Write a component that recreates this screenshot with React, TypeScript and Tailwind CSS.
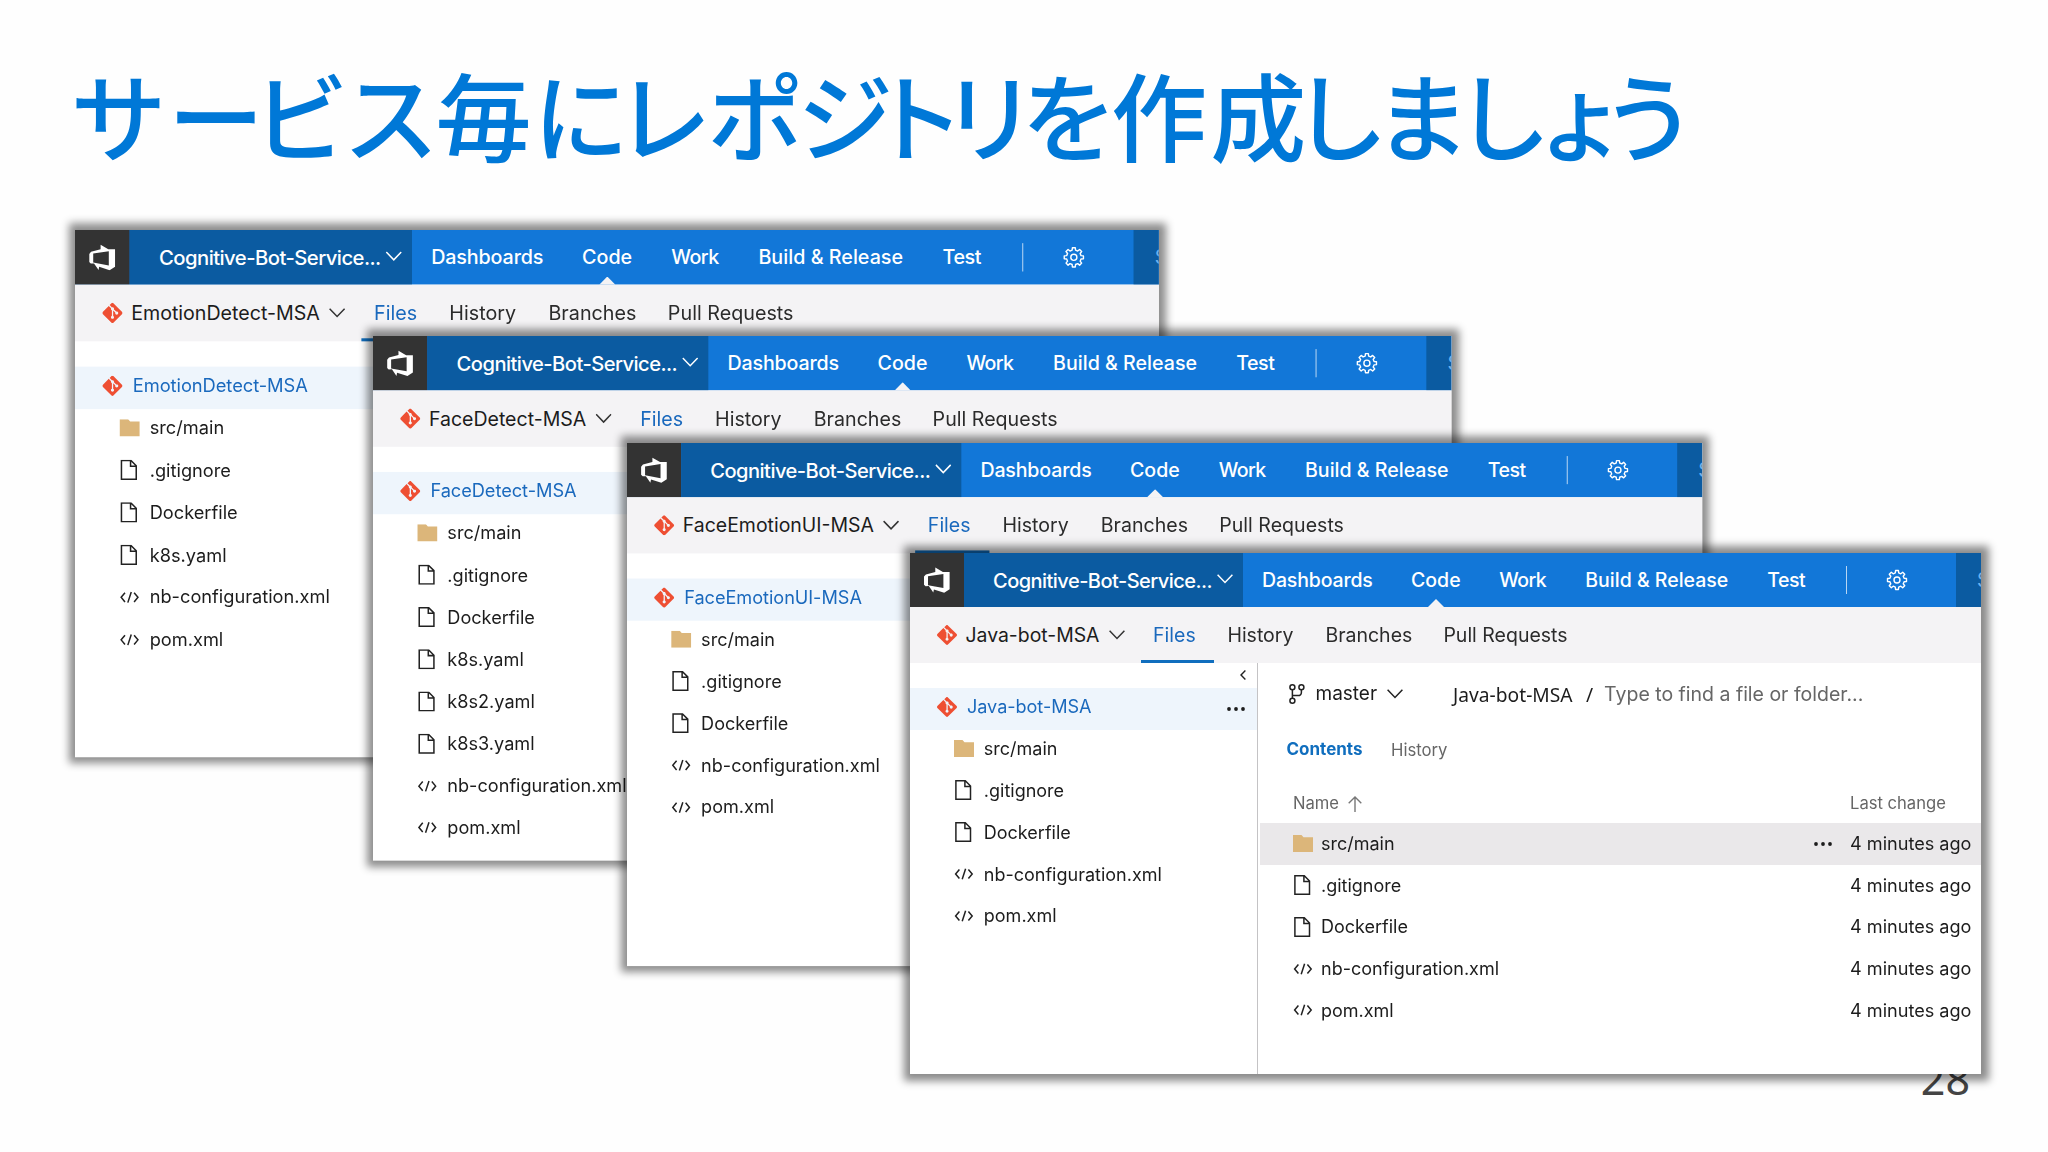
import { clsx } from "clsx";
import type { ReactNode } from "react";
import { SiGit } from "react-icons/si";

type FileKind = "folder" | "file" | "code";

interface RepoEntry {
  kind: FileKind;
  name: string;
}

interface Repo {
  name: string;
  place: string;
  entries: RepoEntry[];
}

const folder = (name: string): RepoEntry => ({ kind: "folder", name });
const file = (name: string): RepoEntry => ({ kind: "file", name });
const code = (name: string): RepoEntry => ({ kind: "code", name });

const repos: Repo[] = [
  {
    name: "EmotionDetect-MSA",
    place: "left-[75px] top-[230px] scale-[1.012]",
    entries: [folder("src/main"), file(".gitignore"), file("Dockerfile"), file("k8s.yaml"), code("nb-configuration.xml"), code("pom.xml")],
  },
  {
    name: "FaceDetect-MSA",
    place: "left-[373px] top-[336px] scale-[1.007]",
    entries: [
      folder("src/main"),
      file(".gitignore"),
      file("Dockerfile"),
      file("k8s.yaml"),
      file("k8s2.yaml"),
      file("k8s3.yaml"),
      code("nb-configuration.xml"),
      code("pom.xml"),
    ],
  },
  {
    name: "FaceEmotionUI-MSA",
    place: "left-[627px] top-[443px] scale-[1.004]",
    entries: [folder("src/main"), file(".gitignore"), file("Dockerfile"), code("nb-configuration.xml"), code("pom.xml")],
  },
  {
    name: "Java-bot-MSA",
    place: "left-[910px] top-[553px]",
    entries: [folder("src/main"), file(".gitignore"), file("Dockerfile"), code("nb-configuration.xml"), code("pom.xml")],
  },
];

const headline: [string, number][] = [
  ["サ", 97.4],
  ["ー", 84.8],
  ["ビ", 90.4],
  ["ス", 92.3],
  ["毎", 97.5],
  ["に", 82.5],
  ["レ", 92.2],
  ["ポ", 89.6],
  ["ジ", 71.9],
  ["ト", 72.3],
  ["リ", 79.8],
  ["を", 89.9],
  ["作", 99.2],
  ["成", 82.1],
  ["し", 82.3],
  ["ま", 80.4],
  ["し", 77.3],
  ["ょ", 68.5],
  ["う", 96],
];

function gearOutline(teeth: number, outer: number, inner: number): string {
  const step = (Math.PI * 2) / teeth;
  const points: string[] = [];
  for (let i = 0; i < teeth; i += 1) {
    const mid = i * step - Math.PI / 2;
    const corners: [number, number][] = [
      [mid - step * 0.3, inner],
      [mid - step * 0.19, outer],
      [mid + step * 0.19, outer],
      [mid + step * 0.3, inner],
    ];
    for (const [angle, radius] of corners) {
      points.push(`${(11 + Math.cos(angle) * radius).toFixed(2)} ${(11 + Math.sin(angle) * radius).toFixed(2)}`);
    }
  }
  return `M${points.join("L")}Z`;
}

const gearPath = gearOutline(8, 9.6, 7.3);

function StudioLogo() {
  return (
    <svg viewBox="0 0 26 26" className="size-[26px]" fill="#fff" fillRule="evenodd">
      <path d="M11.3 .6 18.9 5H25.6V22.2L20.2 25.7 9.9 22.4 9.3 25.6 4.8 19 1.6 19.2 0 17.7V9.6L1.9 7.4 11.3 4.9ZM4 9.3V18.2L19.4 21V7Z" />
    </svg>
  );
}

function Chevron({ className }: { className?: string }) {
  return (
    <svg viewBox="0 0 16 10" className={clsx("h-[10px] w-4 shrink-0", className)} fill="none" stroke="currentColor" strokeWidth="1.5">
      <path d="M.6 .8 8 8.5 15.4 .8" />
    </svg>
  );
}

function Gear() {
  return (
    <svg viewBox="0 0 22 22" className="size-[22px]" fill="none" stroke="#fff" strokeWidth="1.4" strokeLinejoin="round">
      <path d={gearPath} />
      <circle cx="11" cy="11" r="3" />
    </svg>
  );
}

function BranchIcon() {
  return (
    <svg viewBox="0 0 16 20" className="h-5 w-4" fill="none" stroke="#222" strokeWidth="1.5">
      <circle cx="3.4" cy="3.3" r="2.5" />
      <circle cx="12.4" cy="3.3" r="2.5" />
      <circle cx="3.4" cy="16.7" r="2.5" />
      <path d="M3.4 5.8V14.2M12.4 5.8V8.2Q12.4 11.6 9 11.6H3.4" />
    </svg>
  );
}

function Dots() {
  return (
    <svg viewBox="0 0 18 4" className="h-1 w-[18px]" fill="#1c1c1c">
      <circle cx="2" cy="2" r="1.9" />
      <circle cx="9" cy="2" r="1.9" />
      <circle cx="16" cy="2" r="1.9" />
    </svg>
  );
}

function KindIcon({ kind }: { kind: FileKind }) {
  if (kind === "folder") {
    return (
      <svg viewBox="0 0 20 17" className="h-[17px] w-5" fill="#dcb67a">
        <path d="M0 0H8.5L10.5 2.2H20V17H0Z" />
      </svg>
    );
  }
  if (kind === "file") {
    return (
      <svg viewBox="0 0 20 20" className="size-5" fill="none" stroke="#222" strokeWidth="1.5">
        <path d="M1.9 .8H11.3L16.5 6V19.2H1.9ZM10.9 .8V6.4H16.5" />
      </svg>
    );
  }
  return (
    <svg viewBox="0 0 20 12" className="h-3 w-5" fill="none" stroke="#222" strokeWidth="1.5">
      <path d="M5.4 1.4 1.6 6 5.4 10.6M14.4 1.4 18.2 6 14.4 10.6M11.6 .8 8.2 11.2" />
    </svg>
  );
}

function NavItem({ children, className }: { children: ReactNode; className: string }) {
  return <span className={clsx("shrink-0 whitespace-nowrap", className)}>{children}</span>;
}

function TopBar() {
  return (
    <header className="flex h-[54.3px] shrink-0 bg-[#1277d8] text-[19.5px] font-medium text-white">
      <div className="flex w-[54px] shrink-0 items-center justify-center bg-[#333]">
        <StudioLogo />
      </div>
      <div className="flex w-[279px] shrink-0 items-center bg-[#0b5ba1] pl-[29px]">
        <span className="mt-[2px] w-[224px] text-[20px] tracking-[-0.53px]">Cognitive-Bot-Service...</span>
        <Chevron className="-mt-[3px]" />
      </div>
      <nav className="flex min-w-0 flex-1 items-center pl-[19px]">
        <NavItem className="w-[149px] tracking-[-0.15px]">Dashboards</NavItem>
        <NavItem className="relative flex h-full w-[88.3px] items-center">
          Code
          <svg viewBox="0 0 16 8" className="absolute bottom-0 left-[17px] h-2 w-4" fill="#f4f3f5">
            <path d="M0 8 8 0 16 8Z" />
          </svg>
        </NavItem>
        <NavItem className="w-[86px] tracking-[-0.6px]">Work</NavItem>
        <NavItem className="w-[182px]">Build &amp; Release</NavItem>
        <NavItem className="w-[78.7px] tracking-[-0.5px]">Test</NavItem>
        <span className="h-7 w-px shrink-0 bg-white/70" />
        <span className="ml-[39px] shrink-0">
          <Gear />
        </span>
      </nav>
      <div className="w-[25px] shrink-0 overflow-hidden bg-[#0b5ba1] pt-[13px] pl-[21px] font-normal text-[#6fb1ee]">S</div>
    </header>
  );
}

function RepoBar({ name }: { name: string }) {
  return (
    <div className="flex h-[55.4px] shrink-0 items-center bg-[#f4f3f5] pl-[27px] text-[19.5px] text-[#2b2b2b]">
      <SiGit className="size-5 shrink-0 text-[#ee4f33]" />
      <span className="mt-[2px] ml-[8.5px] text-[19.4px] whitespace-nowrap text-[#1c1c1c]">{name}</span>
      <Chevron className="ml-[9px] text-[#333]" />
      <span className="ml-[16px] flex h-full w-[73.6px] shrink-0 items-center border-b-[3px] border-[#106ebe] pt-[5px] pl-[12.6px] text-[#1a69bd]">
        Files
      </span>
      <span className="mt-[2px] ml-[13.3px] w-[98px] shrink-0">History</span>
      <span className="mt-[2px] w-[118px] shrink-0">Branches</span>
      <span className="mt-[2px] whitespace-nowrap">Pull Requests</span>
    </div>
  );
}

function FileTree({ repo }: { repo: Repo }) {
  return (
    <aside className="flex w-[348px] shrink-0 flex-col border-r border-[#c4c3c5] text-[18px] text-[#1c1c1c]">
      <div className="flex h-[25.3px] shrink-0 items-center justify-end pr-[11.5px]">
        <svg viewBox="0 0 6 10" className="h-[10px] w-[6px]" fill="none" stroke="#222" strokeWidth="1.4">
          <path d="M5.4 .5 1 5 5.4 9.5" />
        </svg>
      </div>
      <div className="flex h-[41.85px] shrink-0 items-center bg-[#eef5fc] pr-[12.5px] pb-[4.5px] pl-[27px]">
        <SiGit className="size-5 text-[#ee4f33]" />
        <span className="ml-[10px] text-[18.1px] tracking-[-0.05px] text-[#1a69bd]">{repo.name}</span>
        <span className="mt-[4px] ml-auto flex">
          <Dots />
        </span>
      </div>
      {repo.entries.map((entry) => (
        <div key={entry.name} className="flex h-[41.85px] shrink-0 items-center gap-[9.5px] pb-[4.5px] pl-[44.3px]">
          <KindIcon kind={entry.kind} />
          <span>{entry.name}</span>
        </div>
      ))}
    </aside>
  );
}

function ContentsPane({ repo }: { repo: Repo }) {
  return (
    <section className="flex min-w-0 flex-1 flex-col pl-[2px] text-[18px] text-[#1c1c1c]">
      <div className="flex h-[62px] shrink-0 items-center pl-[28.5px] whitespace-nowrap">
        <BranchIcon />
        <span className="mt-[2px] ml-[11px] text-[19px]">master</span>
        <Chevron className="ml-[10px] text-[#222]" />
        <span className="mt-[3px] ml-[50px] w-[133px] font-['Noto_Sans','Open_Sans',sans-serif] text-[19.2px]">{repo.name}</span>
        <span className="mt-[3px] w-[18px] font-['Noto_Sans','Open_Sans',sans-serif] text-[19.2px]">/</span>
        <span className="mt-[2px] text-[19.5px] text-[#666]">Type to find a file or folder...</span>
      </div>
      <div className="flex h-[49px] shrink-0 items-center gap-[28.5px] pt-[2px] pl-[26.5px]">
        <span className="text-[17px] font-bold text-[#106ebe]">Contents</span>
        <span className="text-[16.7px] text-[#666]">History</span>
      </div>
      <div className="flex h-[49.5px] shrink-0 items-center pt-[11px] pl-[33px] text-[16.6px] text-[#666]">
        <span>Name</span>
        <svg viewBox="0 0 14 16" className="ml-[9px] h-4 w-[14px]" fill="none" stroke="#777" strokeWidth="1.4">
          <path d="M7 16V1M.7 7.2 7 1 13.3 7.2" />
        </svg>
        <span className="ml-auto w-[131px]">Last change</span>
      </div>
      {repo.entries.map((entry, index) => (
        <div key={entry.name} className={clsx("flex h-[41.7px] shrink-0 items-center pb-px pl-[32.5px]", index === 0 && "bg-[#eae8ea]")}>
          <KindIcon kind={entry.kind} />
          <span className="ml-[8.5px]">{entry.name}</span>
          <span className="ml-auto flex w-[36px]">{index === 0 && <Dots />}</span>
          <span className="w-[131px] text-[18.1px] whitespace-nowrap">4 minutes ago</span>
        </div>
      ))}
    </section>
  );
}

function RepoWindow({ repo, detailed }: { repo: Repo; detailed: boolean }) {
  return (
    <div className={clsx("absolute origin-top-left bg-white shadow-[1px_0px_8px_7px_rgba(0,0,0,0.45)]", repo.place)}>
      <div className="flex h-[521px] w-[1071px] flex-col overflow-hidden">
        <TopBar />
        <RepoBar name={repo.name} />
        <div className="flex min-h-0 flex-1">
          <FileTree repo={repo} />
          {detailed && <ContentsPane repo={repo} />}
        </div>
      </div>
    </div>
  );
}

export default function App() {
  return (
    <main className="relative flex h-[1152px] w-[2048px] flex-col justify-between overflow-hidden bg-[#fefefe] pt-[65px] pb-[52px] font-['Inter',sans-serif]">
      <h1 className="flex pl-[70.5px] font-['Noto_Sans_CJK_JP',sans-serif] text-[96px] leading-[96px] font-medium text-[#0078d7]">
        {headline.map(([char, advance], index) => (
          <span key={index} className="shrink-0 whitespace-nowrap" style={{ width: advance }}>
            {char}
          </span>
        ))}
      </h1>
      <p className="self-end pr-[78px] font-['Noto_Sans',sans-serif] text-[43px] leading-none text-[#444]">28</p>
      {repos.map((repo, index) => (
        <RepoWindow key={repo.name} repo={repo} detailed={index === repos.length - 1} />
      ))}
    </main>
  );
}
